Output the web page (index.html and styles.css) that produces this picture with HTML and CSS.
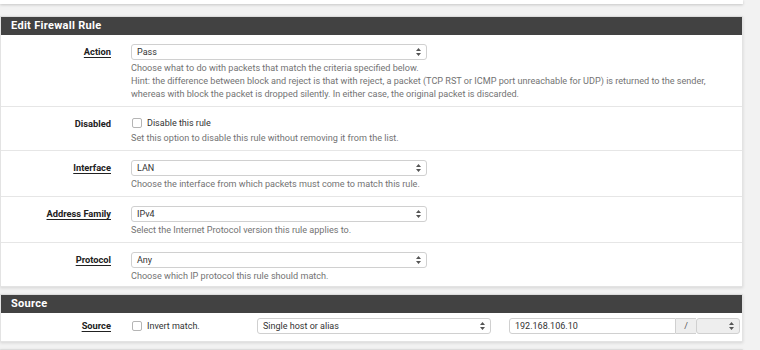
FILE: index.html
```html
<!DOCTYPE html>
<html lang="en">
<head>
    <meta charset="UTF-8">
    <title>Edit Firewall Rule</title>
    <link rel="stylesheet" href="styles.css">
</head>
<body>
    <div class="page">
        <div class="top-panel"></div>

        <div class="panel">
            <div class="panel-heading">Edit Firewall Rule</div>
            <div class="panel-body">
                <div class="row">
                    <div class="row-label"><span class="link">Action</span></div>
                    <div class="row-field">
                        <div class="select wide">
                            <span>Pass</span>
                            <svg class="arrows" width="5" height="8" viewBox="0 0 5 8"><path d="M2.5 0 L5 3 L0 3 Z M2.5 8 L5 5 L0 5 Z" fill="#555"/></svg>
                        </div>
                        <div class="help">
                            Choose what to do with packets that match the criteria specified below.<br>
                            Hint: the difference between block and reject is that with reject, a packet (TCP RST or ICMP port unreachable for UDP) is returned to the sender,<br>
                            whereas with block the packet is dropped silently. In either case, the original packet is discarded.
                        </div>
                    </div>
                </div>

                <div class="row">
                    <div class="row-label">Disabled</div>
                    <div class="row-field">
                        <label class="check"><span class="box"></span>Disable this rule</label>
                        <div class="help">Set this option to disable this rule without removing it from the list.</div>
                    </div>
                </div>

                <div class="row">
                    <div class="row-label"><span class="link">Interface</span></div>
                    <div class="row-field">
                        <div class="select wide">
                            <span>LAN</span>
                            <svg class="arrows" width="5" height="8" viewBox="0 0 5 8"><path d="M2.5 0 L5 3 L0 3 Z M2.5 8 L5 5 L0 5 Z" fill="#555"/></svg>
                        </div>
                        <div class="help">Choose the interface from which packets must come to match this rule.</div>
                    </div>
                </div>

                <div class="row">
                    <div class="row-label"><span class="link">Address Family</span></div>
                    <div class="row-field">
                        <div class="select wide">
                            <span>IPv4</span>
                            <svg class="arrows" width="5" height="8" viewBox="0 0 5 8"><path d="M2.5 0 L5 3 L0 3 Z M2.5 8 L5 5 L0 5 Z" fill="#555"/></svg>
                        </div>
                        <div class="help">Select the Internet Protocol version this rule applies to.</div>
                    </div>
                </div>

                <div class="row last">
                    <div class="row-label"><span class="link">Protocol</span></div>
                    <div class="row-field">
                        <div class="select wide">
                            <span>Any</span>
                            <svg class="arrows" width="5" height="8" viewBox="0 0 5 8"><path d="M2.5 0 L5 3 L0 3 Z M2.5 8 L5 5 L0 5 Z" fill="#555"/></svg>
                        </div>
                        <div class="help">Choose which IP protocol this rule should match.</div>
                    </div>
                </div>
            </div>
        </div>

        <div class="panel">
            <div class="panel-heading">Source</div>
            <div class="panel-body">
                <div class="row source-row last">
                    <div class="row-label"><span class="link">Source</span></div>
                    <div class="row-field inline">
                        <label class="check invert"><span class="box"></span>Invert match.</label>
                        <div class="select type">
                            <span>Single host or alias</span>
                            <svg class="arrows" width="5" height="8" viewBox="0 0 5 8"><path d="M2.5 0 L5 3 L0 3 Z M2.5 8 L5 5 L0 5 Z" fill="#555"/></svg>
                        </div>
                        <div class="addr-group">
                            <div class="addr-input">192.168.106.10</div>
                            <div class="addon">/</div>
                            <div class="select mask">
                                <span></span>
                                <svg class="arrows" width="5" height="8" viewBox="0 0 5 8"><path d="M2.5 0 L5 3 L0 3 Z M2.5 8 L5 5 L0 5 Z" fill="#555"/></svg>
                            </div>
                        </div>
                    </div>
                </div>
            </div>
        </div>

        <div class="panel">
            <div class="panel-heading">&nbsp;</div>
        </div>
    </div>
</body>
</html>
```

FILE: styles.css
```css
body {
    margin: 0;
    background-color: #f2f2f2;
    font-family: Roboto, "Liberation Sans", sans-serif;
    color: #212121;
    overflow: hidden;
}
.page {
    width: 743px;
}
.top-panel {
    height: 4px;
    background: #fff;
    box-shadow: 0 1px 3px rgba(0, 0, 0, 0.18);
    margin-bottom: 12px;
}
.panel {
    background: #fff;
    border: 1px solid #e3e3e3;
    border-top: 1px solid #dcdcdc;
    box-shadow: 0 1px 3px rgba(0, 0, 0, 0.12);
    margin-bottom: 7px;
}
.panel-heading {
    background: #424242;
    color: #fff;
    font-size: 11px;
    font-weight: bold;
    letter-spacing: 0.3px;
    height: 18px;
    line-height: 18px;
    padding-left: 10px;
}
.row {
    display: flex;
    border-bottom: 1px solid #e6e6e6;
    padding: 9px 0 5px;
}
.row.last {
    border-bottom: none;
    padding-bottom: 3px;
}
.row-label {
    width: 110px;
    flex: none;
    text-align: right;
    font-size: 9.3px;
    font-weight: bold;
    line-height: 16px;
}
.link {
    text-decoration: underline;
    text-underline-offset: 2px;
}
.row-field {
    margin-left: 20px;
    flex: 1;
}
.select {
    display: flex;
    align-items: center;
    justify-content: space-between;
    box-sizing: border-box;
    height: 16px;
    border: 1px solid #d0d0d0;
    border-radius: 3px;
    background: #fff;
    padding: 0 5px 0 5px;
    font-size: 9px;
    color: #333;
}
.select.wide {
    width: 296px;
}
.arrows {
    flex: none;
}
.help {
    margin-top: 2px;
    font-size: 9.1px;
    line-height: 13px;
    color: #737373;
}
.check {
    display: flex;
    align-items: center;
    height: 14px;
    font-size: 9px;
    color: #333;
}
.box {
    width: 8px;
    height: 8px;
    border: 1px solid #b5b5b5;
    border-radius: 2px;
    margin: 0 5px 0 1px;
    background: #fff;
}
.row.source-row {
    padding: 5px 0 7px;
}
.row-field.inline {
    display: flex;
    align-items: center;
}
.invert {
    width: 126px;
}
.select.type {
    width: 234px;
}
.addr-group {
    display: flex;
    margin-left: 18px;
    height: 16px;
}
.addr-input {
    box-sizing: border-box;
    width: 167px;
    height: 16px;
    border: 1px solid #d0d0d0;
    border-radius: 3px 0 0 3px;
    padding-left: 5px;
    font-size: 9px;
    line-height: 14px;
    color: #333;
}
.addon {
    box-sizing: border-box;
    width: 20px;
    height: 16px;
    background: #eee;
    border-top: 1px solid #d0d0d0;
    border-bottom: 1px solid #d0d0d0;
    text-align: center;
    font-size: 9px;
    line-height: 14px;
    color: #555;
}
.select.mask {
    width: 44px;
    background: #eeeeee;
    border-radius: 3px;
}
```
